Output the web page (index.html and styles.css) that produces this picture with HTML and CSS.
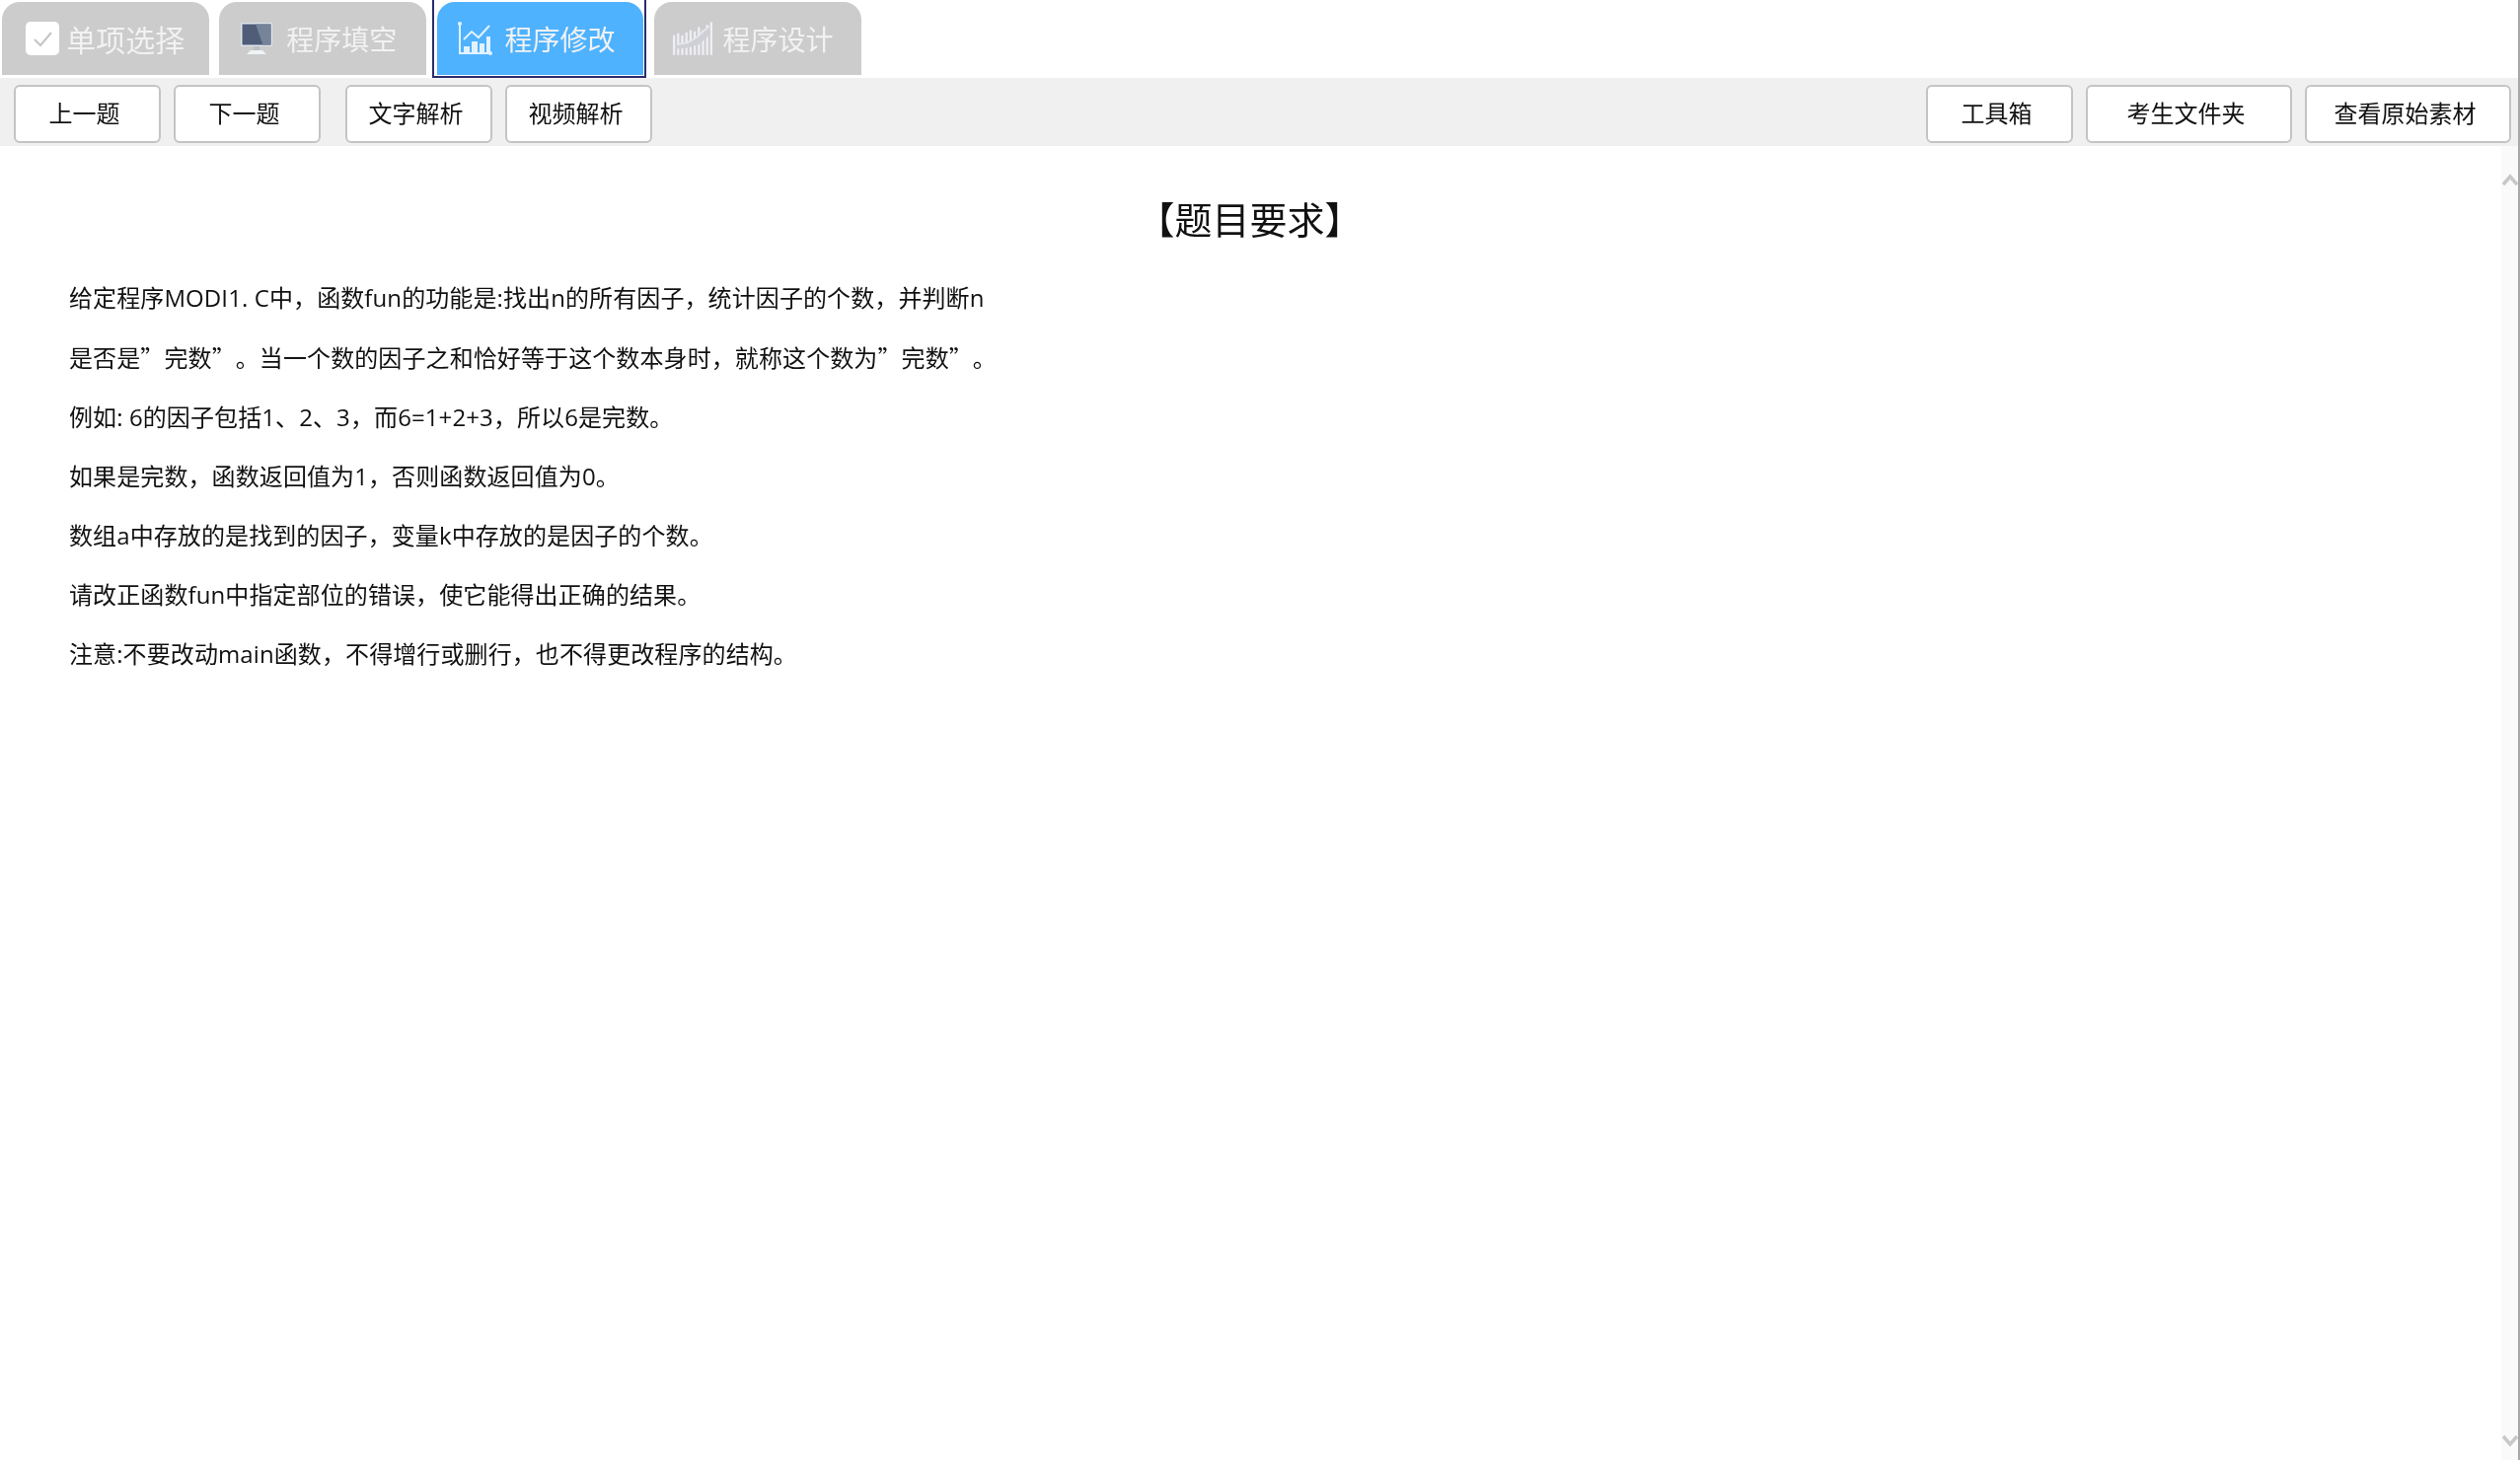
FILE: index.html
```html
<!DOCTYPE html>
<html lang="zh-CN">
<head>
<meta charset="utf-8">
<title>程序修改</title>
<link rel="stylesheet" href="styles.css">
</head>
<body>
<div class="page">
  <nav class="tabs">
    <div class="tab tab-first">
      <svg class="ico ico-check" viewBox="0 0 34 34"><rect width="34" height="34" rx="5" fill="#fff"/><path d="M9 18l6 6 11-13" fill="none" stroke="#c4c4c4" stroke-width="2"/></svg>
      <span>单项选择</span>
    </div>
    <div class="tab tab-sm">
      <svg class="ico ico-mon" viewBox="0 0 34 34"><rect x="1" y="1" width="32" height="24" rx="1" fill="#dfe6ee"/><rect x="2.500" y="2.500" width="29" height="21" fill="#4f5d78"/><path d="M16 2.500h15.500v21h-8z" fill="#76849a"/><path d="M14 25h6v4h-6z" fill="#b9c0c6"/><path d="M7 33l4-4h12l4 4z" fill="#f0f2f4"/></svg>
      <span>程序填空</span>
    </div>
    <div class="tab tab-sm tab-active">
      <svg class="ico ico-chart" viewBox="0 0 36 36"><circle cx="3" cy="3" r="2" fill="#e3f2ff"/><circle cx="34" cy="33" r="2" fill="#e3f2ff"/><path d="M3 2v31h32" fill="none" stroke="#e3f2ff" stroke-width="2"/><path d="M7 19l8-8 7 6 11-12" fill="none" stroke="#e3f2ff" stroke-width="2"/><path d="M7 26h6v6H7zM15 21h6v11h-6zM23 23h5v9h-5zM30 16h4v16h-4z" fill="#e3f2ff"/></svg>
      <span>程序修改</span>
    </div>
    <div class="tab tab-sm tab-last">
      <svg class="ico ico-bars" viewBox="0 0 40 34"><path d="M2 14v19M6 12v21M10 14v19M14 11v22M18 9v24M22 10v23M26 6v27M30 9v24M34 4v29M38 1v32" fill="none" stroke="#eeeef5" stroke-width="2.200"/><path d="M5 23l10-2 9-5 12-11 1 8-11 10-11 3-10 1z" fill="#cfcfd6"/><path d="M5 23l10-2 9-5 12-11" fill="none" stroke="#e8e8f0" stroke-width="1.500"/></svg>
      <span>程序设计</span>
    </div>
  </nav>
  <div class="toolbar">
    <div class="group">
      <button class="btn">上一题</button>
      <button class="btn">下一题</button>
      <button class="btn btn-split">文字解析</button>
      <button class="btn">视频解析</button>
    </div>
    <div class="group">
      <button class="btn">工具箱</button>
      <button class="btn btn-wide">考生文件夹</button>
      <button class="btn btn-wide">查看原始素材</button>
    </div>
  </div>
  <main class="content">
    <article class="text">
      <h1 class="title">【题目要求】</h1>
      <p>给定程序MODI1. C中，函数fun的功能是:找出n的所有因子，统计因子的个数，并判断n</p>
      <p>是否是<span class="q">”</span>完数<span class="q">”</span>。当一个数的因子之和恰好等于这个数本身时，就称这个数为<span class="q">”</span>完数<span class="q">”</span>。</p>
      <p>例如: 6的因子包括1、2、3，而6=1+2+3，所以6是完数。</p>
      <p>如果是完数，函数返回值为1，否则函数返回值为0。</p>
      <p>数组a中存放的是找到的因子，变量k中存放的是因子的个数。</p>
      <p>请改正函数fun中指定部位的错误，使它能得出正确的结果。</p>
      <p>注意:不要改动main函数，不得增行或删行，也不得更改程序的结构。</p>
    </article>
    <div class="scrollbar">
      <svg class="arrow" viewBox="0 0 16 14"><path d="M1 12l7-8 7 8" fill="none" stroke="#c8c8c8" stroke-width="3.500"/></svg>
      <svg class="arrow" viewBox="0 0 16 14"><path d="M1 2l7 8 7-8" fill="none" stroke="#c8c8c8" stroke-width="3.500"/></svg>
    </div>
  </main>
</div>
</body>
</html>
```
FILE: styles.css
```css
* { box-sizing: border-box; }
html, body { margin: 0; height: 100%; overflow: hidden; background: #fff; }
body { font-family: "Noto Sans CJK SC", "Noto Sans", sans-serif; color: #111; text-spacing-trim: space-all; }
.page { display: flex; flex-direction: column; height: 1480px; border-right: 2px solid #a8a8a8; filter: blur(0.4px); }

.tabs { display: flex; height: 79px; padding: 2px 0 3px 2px; gap: 10.800px; flex: none; }
.tab {
  position: relative;
  width: 209.600px; height: 74px; background: #cccccc; color: #f2f2f2;
  border-radius: 18px 18px 0 0; display: flex; align-items: center; justify-content: center;
  gap: 8px; font-size: 30px; line-height: 1;
}
.tab-first { gap: 7px; }
.tab-sm { font-size: 28px; gap: 9px; padding-right: 9px; }
.tab-last { gap: 7px; padding-right: 10px; }
.tab-active { background: #4fb2fe; }
.tab-active::after {
  content: ""; position: absolute; left: -5px; right: -3px; top: -8px; bottom: -3px;
  border: 2px solid #2b2c6e;
}
.ico { flex: none; display: block; }
.ico-check { width: 34px; height: 34px; }
.ico-mon { width: 34px; height: 34px; margin-right: 4px; }
.ico-chart { width: 36px; height: 36px; margin-right: 4px; }
.ico-bars { width: 42px; height: 36px; margin-right: 2px; }

.toolbar {
  height: 69px; flex: none; background: #f0f0f0; display: flex; justify-content: space-between;
  padding: 7px 7px 3px 14px;
}
.group { display: flex; gap: 13px; }
.btn {
  width: 149px; height: 59px; background: #fff; border: 2px solid #c4c4c4; border-radius: 6px;
  font: 24px/1 "Noto Sans CJK SC", sans-serif; color: #111; padding: 0 6px 3px 0;
}
.btn-split { margin-left: 12px; }
.btn-wide { width: 209px; }

.content { flex: 1; display: flex; min-height: 0; }
.text { flex: 1; padding: 45px 0 0 70px; }
.title { margin: 0 0 23px; padding-right: 72px; text-align: center; font-size: 38px; font-weight: 400; line-height: 56px; }
.text p { margin: 0; font: 24px/60px "Open Sans", "Noto Sans CJK SC", sans-serif; white-space: nowrap; letter-spacing: 0.1px; }
.text .q { font-family: "Noto Sans CJK SC", sans-serif; }
.scrollbar {
  width: 17px; flex: none; background: #fafafa;
  display: flex; flex-direction: column; justify-content: space-between; padding: 27px 0 12px 1px;
}
.arrow { width: 16px; height: 14px; display: block; }
```
